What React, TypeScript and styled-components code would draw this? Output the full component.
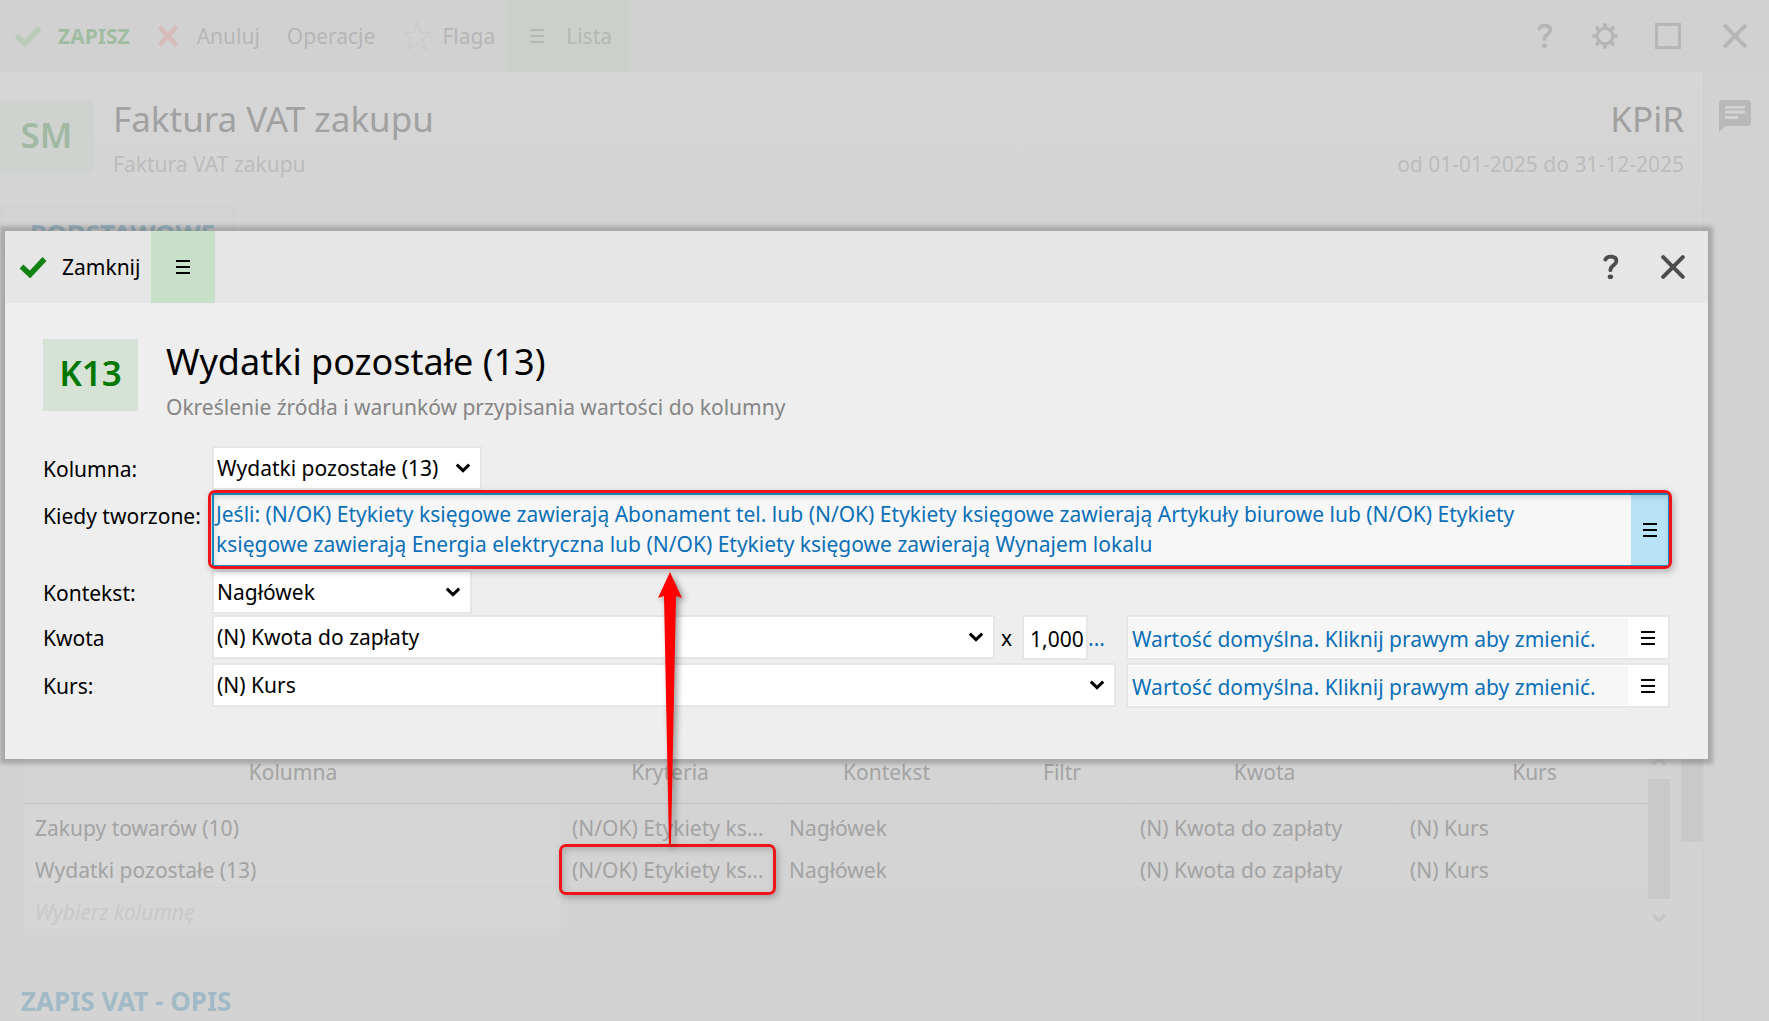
import React from "react";
import styled, { createGlobalStyle, css } from "styled-components";

const GlobalStyle = createGlobalStyle`
  *, *::before, *::after { box-sizing: border-box; }
  body {
    margin: 0;
    background: #d3d3d3;
    font-family: "Noto Sans", "Open Sans", sans-serif;
    font-size: 21px;
    line-height: 30px;
    overflow: hidden;
  }
  button, input, select, textarea {
    font: inherit;
    color: inherit;
    margin: 0;
    padding: 0;
    border: 0;
    border-radius: 0;
    background: none;
    outline: none;
  }
  h1, h2, p { margin: 0; font-weight: 400; }
`;

/* ---------- icons ---------- */

const CheckIcon = () => (
  <svg width="28" height="22" viewBox="0 0 28 22" aria-hidden="true">
    <path d="M2.5 10.5 L11 18.5 L25.5 3" fill="none" stroke="currentColor" strokeWidth="5.5" />
  </svg>
);

const CrossIcon = () => (
  <svg width="22" height="22" viewBox="0 0 22 22" aria-hidden="true">
    <path d="M2.5 2 L19.5 20 M19.5 2 L2.5 20" stroke="currentColor" strokeWidth="5" />
  </svg>
);

const StarIcon = () => (
  <svg width="30" height="30" viewBox="0 0 30 30" aria-hidden="true">
    <path
      d="M15 1.5 L18.6 11.5 H29 L20.6 18 L24 28.5 L15 22.4 L6 28.5 L9.4 18 L1 11.5 H11.4 Z"
      fill="none"
      stroke="currentColor"
      strokeWidth="1"
    />
  </svg>
);

const MenuIcon = () => (
  <svg width="14" height="14" viewBox="0 0 14 14" aria-hidden="true">
    <path d="M0 1 H14 M0 7 H14 M0 13 H14" stroke="currentColor" strokeWidth="2" />
  </svg>
);

const HelpIcon = () => (
  <svg width="16" height="26" viewBox="0 0 16 26" aria-hidden="true">
    <path
      d="M2.3 5.6 C3.4 3.2 5.2 2.6 7.8 2.6 C11.4 2.6 13.4 4.4 13.4 7.1 C13.4 11.3 7.4 11.2 7.4 16.2"
      fill="none"
      stroke="currentColor"
      strokeWidth="3.8"
      strokeLinecap="round"
      strokeLinejoin="round"
    />
    <ellipse cx="7.4" cy="22.8" rx="2.7" ry="2.3" fill="currentColor" />
  </svg>
);

const GearIcon = () => (
  <svg width="26" height="26" viewBox="0 0 26 26" aria-hidden="true">
    <circle cx="13" cy="13" r="7.8" fill="none" stroke="currentColor" strokeWidth="3" />
    <path
      d="M13 2 V5 M13 21 V24 M2 13 H5 M21 13 H24 M5.2 5.2 L7.3 7.3 M18.7 18.7 L20.8 20.8 M5.2 20.8 L7.3 18.7 M18.7 7.3 L20.8 5.2"
      stroke="currentColor"
      strokeWidth="4"
      strokeLinecap="round"
    />
  </svg>
);

const MaximizeIcon = () => (
  <svg width="26" height="26" viewBox="0 0 26 26" aria-hidden="true">
    <rect x="1.5" y="1.5" width="23" height="23" fill="none" stroke="currentColor" strokeWidth="3" />
  </svg>
);

const CloseIcon = () => (
  <svg width="24" height="24" viewBox="0 0 24 24" aria-hidden="true">
    <path d="M2.2 2.2 L21.8 21.8 M21.8 2.2 L2.2 21.8" stroke="currentColor" strokeWidth="4" strokeLinecap="round" />
  </svg>
);

const ChatIcon = () => (
  <svg width="34" height="34" viewBox="0 0 34 34" aria-hidden="true">
    <path
      fillRule="evenodd"
      fill="currentColor"
      d="M4 1 H30 Q33 1 33 4 V24 Q33 27 30 27 H7.500 L1 33 V4 Q1 1 4 1 Z M7 7 V9.500 H27 V7 Z M7 11.500 V14.500 H27 V11.500 Z M7 17 V20 H20 V17 Z"
    />
  </svg>
);

const ChevronIcon = ({ up }: { up?: boolean }) => (
  <svg width="14" height="10" viewBox="0 0 14 10" aria-hidden="true">
    <path
      d={up ? "M0.8 8.4 L7 2.4 L13.2 8.4" : "M0.8 1.6 L7 7.6 L13.2 1.6"}
      fill="none"
      stroke="currentColor"
      strokeWidth="3"
    />
  </svg>
);

/* ---------- shared parts ---------- */

const Toolbar = styled.div`
  display: flex;
  align-items: stretch;
  justify-content: space-between;
  height: 72px;
  flex: none;
`;

const ToolGroup = styled.div`
  display: flex;
`;

const ToolButton = styled.button<{ $tone?: string; $icon?: string; $bold?: boolean; $gap?: number }>`
  display: flex;
  align-items: center;
  gap: ${(p) => p.$gap ?? 15}px;
  padding: 0 11px 0 14px;
  color: ${(p) => p.$tone ?? "inherit"};
  font-weight: ${(p) => (p.$bold ? 700 : 400)};
  svg { color: ${(p) => p.$icon ?? "inherit"}; flex: none; }
`;

const IconButton = styled.button<{ $width: number }>`
  display: flex;
  align-items: center;
  justify-content: center;
  width: ${(p) => p.$width}px;
`;

const Heading = styled.div<{ $gap: number }>`
  display: flex;
  align-items: flex-start;
  gap: ${(p) => p.$gap}px;
`;

const Badge = styled.div<{ $bg: string; $fg: string; $width: number }>`
  display: flex;
  align-items: center;
  justify-content: center;
  width: ${(p) => p.$width}px;
  height: 72px;
  padding-bottom: 4px;
  font-size: 35px;
  font-weight: 600;
  line-height: 46px;
  background: ${(p) => p.$bg};
  color: ${(p) => p.$fg};
`;

const TitleBlock = styled.div<{ $right?: boolean }>`
  display: flex;
  flex-direction: column;
  gap: 7px;
  text-align: ${(p) => (p.$right ? "right" : "left")};
  margin-left: ${(p) => (p.$right ? "auto" : "0")};
`;

const Title = styled.h1<{ $fg: string; $size?: number }>`
  font-size: ${(p) => p.$size ?? 35}px;
  line-height: 46px;
  color: ${(p) => p.$fg};
`;

const Subtitle = styled.p<{ $fg: string }>`
  color: ${(p) => p.$fg};
`;

const callout = css`
  content: "";
  position: absolute;
  border: 3px solid #f01418;
  border-radius: 7px;
  box-shadow: 2px 3px 7px rgba(0, 0, 0, 0.25), inset 2px 3px 7px rgba(0, 0, 0, 0.18);
  pointer-events: none;
`;

/* ---------- page behind the dialog ---------- */

const Page = styled.div`
  position: relative;
  display: flex;
  flex-direction: column;
  height: 100vh;
  overflow: hidden;
  background: #d3d3d3;
`;

const PageToolbar = styled(Toolbar)`
  background: #d1d1d1;
  color: #b6b6b6;
`;

const PageTools = styled(ToolGroup)`
  gap: 2px;
`;

const ListButton = styled(ToolButton)`
  padding: 0 16px 0 22px;
  gap: 22px;
  background: #cbd1ca;
`;

const PageBody = styled.div`
  display: flex;
  flex: 1;
  min-height: 0;
`;

const Main = styled.main`
  display: flex;
  flex-direction: column;
  flex: 1;
  min-width: 0;
  background: linear-gradient(#d6d6d6, #d3d3d3 180px);
`;

const SidePanel = styled.aside`
  display: flex;
  justify-content: center;
  align-items: flex-start;
  width: 66px;
  flex: none;
  padding: 27px 4px 0 0;
  border-left: 1px solid #cecece;
  color: #b9b9b9;
`;

const PageHeader = styled.header`
  padding: 24px 19px 0 0;
  ${Badge} { margin-top: 5px; }
`;

const Columns = styled.div`
  display: flex;
  flex: 1;
  min-height: 0;
`;

const Sheet = styled.div`
  flex: 1;
  min-width: 0;
  padding-top: 27px;
`;

const PageScroll = styled.div`
  width: 22px;
  flex: none;
`;

const PageThumb = styled.div`
  height: 663px;
  background: linear-gradient(transparent 200px, #c9c9c9 200px);
`;

const Tab = styled.button`
  display: block;
  height: 46px;
  margin-left: 1px;
  padding: 10px 18px 0 28px;
  border: 1px solid #cecece;
  font-size: 26px;
  font-weight: 700;
  color: #9fb8c3;
`;

const TabPanel = styled.div`
  height: 490px;
`;

const TableArea = styled.div`
  display: flex;
  margin: 0 11px 0 25px;
`;

const Table = styled.table`
  flex: 1;
  min-width: 0;
  width: 100%;
  align-self: flex-start;
  border-collapse: collapse;
  table-layout: fixed;
  color: #a3a3a3;
`;

const Col = styled.col<{ $width?: number }>`
  width: ${(p) => (p.$width ? `${p.$width}px` : "auto")};
`;

const HeadCell = styled.th`
  height: 61px;
  padding: 0;
  font-weight: 400;
  background: #d4d4d4;
  border-right: 1px solid #d2d2d2;
  border-bottom: 1px solid #c2c2c2;
  &:last-child { padding-left: 22px; }
`;

const Cell = styled.td<{ $marked?: boolean; $light?: boolean }>`
  position: relative;
  height: 42px;
  padding: 8px 0 0 10px;
  white-space: nowrap;
  background: ${(p) => (p.$light ? "#d6d6d6" : "#d4d4d4")};
  border-right: 1px solid #d2d2d2;
  border-bottom: 1px solid #d2d2d2;
  ${(p) =>
    p.$marked &&
    css`
      &::after {
        ${callout}
        inset: -2px 2px -8px -3px;
        z-index: 1;
      }
    `}
`;

const NewRowInput = styled.input`
  display: block;
  width: 100%;
  font-style: italic;
  &::placeholder { color: #c8c8c8; opacity: 1; }
`;

const TableScroll = styled.div`
  width: 22px;
  flex: none;
  color: #c6c6c6;
`;

const ScrollArrow = styled.button`
  display: flex;
  align-items: center;
  justify-content: center;
  width: 22px;
  height: 37px;
`;

const ScrollThumb = styled.div`
  height: 120px;
  background: #c9c9c9;
`;

const SectionTitle = styled.h2`
  margin: 50px 0 0 21px;
  font-size: 26px;
  font-weight: 700;
  color: #a2bac6;
`;

/* ---------- dialog ---------- */

const Dialog = styled.section`
  position: absolute;
  top: 231px;
  left: 5px;
  right: 61px;
  z-index: 2;
  background: #eeeeee;
  color: #000;
  box-shadow: 0 0 4px 5px rgba(0, 0, 0, 0.2);
`;

const DialogToolbar = styled(Toolbar)`
  background: #e6e6e6;
`;

const DialogTools = styled(ToolGroup)`
  padding-right: 10px;
  color: #4c4c4c;
`;

const DialogMenu = styled(IconButton)`
  background: #c8e0c8;
`;

const DialogBody = styled.div`
  padding: 36px 38px 51px;
`;

const Form = styled.form`
  display: flex;
  flex-direction: column;
  gap: 1px;
  margin-top: 24px;
`;

const FormGroup = styled.div`
  display: flex;
  flex-direction: column;
  gap: 3px;
`;

const FormRow = styled.div`
  display: flex;
  align-items: flex-start;
`;

const Label = styled.label`
  width: 169px;
  flex: none;
  padding-top: 8px;
  white-space: nowrap;
`;

const SelectBox = styled.div<{ $width?: number }>`
  display: grid;
  align-items: center;
  ${(p) => (p.$width ? `width: ${p.$width}px;` : "flex: 1;")}
  min-width: 0;
  height: 44px;
  border: 2px solid #e6e6e6;
  background: #fff;
  > * { grid-area: 1 / 1; }
  svg { justify-self: end; margin-right: 10px; pointer-events: none; }
`;

const Select = styled.select`
  width: 100%;
  height: 40px;
  padding: 0 26px 0 3px;
  appearance: none;
`;

const CriteriaBox = styled.div`
  position: relative;
  display: flex;
  flex: 1;
  min-width: 0;
  height: 74px;
  border: 2px solid #1e96d0;
  background: #f7f7f7;
  &::after {
    ${callout}
    inset: -5px -4px -4px -6px;
  }
`;

const CriteriaText = styled.textarea`
  flex: 1;
  min-width: 0;
  padding: 4px 40px 0 2px;
  resize: none;
  overflow: hidden;
  color: #0c70b8;
`;

const CriteriaMenu = styled(IconButton)`
  background: #b8e2f5;
`;

const Times = styled.span`
  width: 27px;
  flex: none;
  padding: 8px 0 0 6px;
`;

const NumberInput = styled.input`
  width: 66px;
  flex: none;
  height: 45px;
  padding: 2px 0 0 6px;
  border: 2px solid #e6e6e6;
  background: #fff;
`;

const MoreLink = styled.a`
  width: 38px;
  flex: none;
  padding-top: 8px;
  color: #0c70b8;
  text-decoration: none;
`;

const DefaultBox = styled.div<{ $offset?: boolean }>`
  display: flex;
  width: 544px;
  flex: none;
  height: 45px;
  margin-left: ${(p) => (p.$offset ? "10px" : "0")};
  border: 2px solid #e6e6e6;
  background: #fff;
`;

const DefaultInput = styled.input`
  flex: 1;
  min-width: 0;
  margin: 1px 0;
  padding: 3px 0 0 4px;
  background: #f7f7f7;
  color: #0c70b8;
`;

const Arrow = styled.svg`
  position: absolute;
  top: 336px;
  left: 645px;
  overflow: visible;
  filter: drop-shadow(3px 3px 3px rgba(0, 0, 0, 0.4));
  pointer-events: none;
`;

/* ---------- data ---------- */

const columns: { title: string; width?: number }[] = [
  { title: "Kolumna" },
  { title: "Kryteria", width: 217 },
  { title: "Kontekst", width: 216 },
  { title: "Filtr", width: 135 },
  { title: "Kwota", width: 270 },
  { title: "Kurs", width: 248 },
];

const rows = [
  ["Zakupy towarów (10)", "(N/OK) Etykiety ks...", "Nagłówek", "", "(N) Kwota do zapłaty", "(N) Kurs"],
  ["Wydatki pozostałe (13)", "(N/OK) Etykiety ks...", "Nagłówek", "", "(N) Kwota do zapłaty", "(N) Kurs"],
];

const criteria =
  "Jeśli: (N/OK) Etykiety księgowe zawierają Abonament tel. lub (N/OK) Etykiety księgowe zawierają Artykuły biurowe lub (N/OK) Etykiety księgowe zawierają Energia elektryczna lub (N/OK) Etykiety księgowe zawierają Wynajem lokalu";

function SelectField({ id, value, width }: { id: string; value: string; width?: number }) {
  return (
    <SelectBox $width={width}>
      <Select id={id} defaultValue={value}>
        <option value={value}>{value}</option>
      </Select>
      <ChevronIcon />
    </SelectBox>
  );
}

function DefaultField({ label, offset }: { label: string; offset?: boolean }) {
  return (
    <DefaultBox $offset={offset}>
      <DefaultInput aria-label={label} readOnly value="Wartość domyślna. Kliknij prawym aby zmienić." />
      <IconButton type="button" $width={40} aria-label="Menu">
        <MenuIcon />
      </IconButton>
    </DefaultBox>
  );
}

function ColumnDialog() {
  return (
    <Dialog role="dialog" aria-labelledby="dialog-title">
      <DialogToolbar>
        <ToolGroup>
          <ToolButton type="button" $icon="#128312">
            <CheckIcon />
            Zamknij
          </ToolButton>
          <DialogMenu type="button" $width={64} aria-label="Menu">
            <MenuIcon />
          </DialogMenu>
        </ToolGroup>
        <DialogTools>
          <IconButton type="button" $width={74} aria-label="Pomoc">
            <HelpIcon />
          </IconButton>
          <IconButton type="button" $width={50} aria-label="Zamknij okno">
            <CloseIcon />
          </IconButton>
        </DialogTools>
      </DialogToolbar>
      <DialogBody>
        <Heading $gap={28}>
          <Badge $bg="#d6e2d6" $fg="#007800" $width={95}>
            K13
          </Badge>
          <TitleBlock>
            <Title id="dialog-title" $fg="#000" $size={36}>
              Wydatki pozostałe (13)
            </Title>
            <Subtitle $fg="#858585">Określenie źródła i warunków przypisania wartości do kolumny</Subtitle>
          </TitleBlock>
        </Heading>
        <Form>
          <FormGroup>
            <FormRow>
              <Label htmlFor="column">Kolumna:</Label>
              <SelectField id="column" value="Wydatki pozostałe (13)" width={270} />
            </FormRow>
            <FormRow>
              <Label htmlFor="criteria">Kiedy tworzone:</Label>
              <CriteriaBox>
                <CriteriaText id="criteria" rows={2} readOnly value={criteria} />
                <CriteriaMenu type="button" $width={37} aria-label="Menu">
                  <MenuIcon />
                </CriteriaMenu>
              </CriteriaBox>
            </FormRow>
            <FormRow>
              <Label htmlFor="context">Kontekst:</Label>
              <SelectField id="context" value="Nagłówek" width={260} />
            </FormRow>
          </FormGroup>
          <FormGroup>
            <FormRow>
              <Label htmlFor="amount">Kwota</Label>
              <SelectField id="amount" value="(N) Kwota do zapłaty" />
              <Times>x</Times>
              <NumberInput aria-label="Mnożnik" defaultValue="1,000" />
              <MoreLink href="#more">...</MoreLink>
              <DefaultField label="Filtr kwoty" />
            </FormRow>
            <FormRow>
              <Label htmlFor="rate">Kurs:</Label>
              <SelectField id="rate" value="(N) Kurs" />
              <DefaultField label="Filtr kursu" offset />
            </FormRow>
          </FormGroup>
        </Form>
      </DialogBody>
      <Arrow width="40" height="278" viewBox="0 0 40 278" aria-hidden="true">
        <path d="M20 5 L32 31 L26 29 L21 278 H19 L14 29 L8 31 Z" fill="#ff0000" />
      </Arrow>
    </Dialog>
  );
}

export default function App() {
  return (
    <>
      <GlobalStyle />
      <Page>
        <PageToolbar>
          <PageTools>
            <ToolButton type="button" $tone="#a0bca1" $icon="#b8ccb8" $bold $gap={16}>
              <CheckIcon />
              ZAPISZ
            </ToolButton>
            <ToolButton type="button" $icon="#d8bcbc" $gap={18}>
              <CrossIcon />
              Anuluj
            </ToolButton>
            <ToolButton type="button">Operacje</ToolButton>
            <ToolButton type="button" $icon="#c8c8c8" $gap={10}>
              <StarIcon />
              Flaga
            </ToolButton>
            <ListButton type="button">
              <MenuIcon />
              Lista
            </ListButton>
          </PageTools>
          <ToolGroup>
            <IconButton type="button" $width={60} aria-label="Pomoc">
              <HelpIcon />
            </IconButton>
            <IconButton type="button" $width={60} aria-label="Ustawienia">
              <GearIcon />
            </IconButton>
            <IconButton type="button" $width={66} aria-label="Maksymalizuj">
              <MaximizeIcon />
            </IconButton>
            <IconButton type="button" $width={68} aria-label="Zamknij">
              <CloseIcon />
            </IconButton>
          </ToolGroup>
        </PageToolbar>
        <PageBody>
          <Main>
            <PageHeader>
              <Heading $gap={20}>
                <Badge $bg="#cfd3cf" $fg="#a1b9a2" $width={93}>
                  SM
                </Badge>
                <TitleBlock>
                  <Title $fg="#a1a1a1">Faktura VAT zakupu</Title>
                  <Subtitle $fg="#bcbcbc">Faktura VAT zakupu</Subtitle>
                </TitleBlock>
                <TitleBlock $right>
                  <Title as="h2" $fg="#a1a1a1">
                    KPiR
                  </Title>
                  <Subtitle $fg="#bcbcbc">od 01-01-2025 do 31-12-2025</Subtitle>
                </TitleBlock>
              </Heading>
            </PageHeader>
            <Columns>
              <Sheet>
                <Tab type="button">PODSTAWOWE</Tab>
                <TabPanel />
                <TableArea>
                  <Table>
                    <colgroup>
                      {columns.map((c) => (
                        <Col key={c.title} $width={c.width} />
                      ))}
                    </colgroup>
                    <thead>
                      <tr>
                        {columns.map((c) => (
                          <HeadCell key={c.title} scope="col">
                            {c.title}
                          </HeadCell>
                        ))}
                      </tr>
                    </thead>
                    <tbody>
                      {rows.map((row, r) => (
                        <tr key={row[0]}>
                          {row.map((text, c) => (
                            <Cell key={c} $light={c === 0} $marked={r === 1 && c === 1}>
                              {text}
                            </Cell>
                          ))}
                        </tr>
                      ))}
                      <tr>
                        <Cell $light>
                          <NewRowInput aria-label="Nowa kolumna" placeholder="Wybierz kolumnę" />
                        </Cell>
                      </tr>
                    </tbody>
                  </Table>
                  <TableScroll>
                    <ScrollArrow type="button" aria-label="W górę">
                      <ChevronIcon up />
                    </ScrollArrow>
                    <ScrollThumb />
                    <ScrollArrow type="button" aria-label="W dół">
                      <ChevronIcon />
                    </ScrollArrow>
                  </TableScroll>
                </TableArea>
                <SectionTitle>ZAPIS VAT - OPIS</SectionTitle>
              </Sheet>
              <PageScroll>
                <PageThumb />
              </PageScroll>
            </Columns>
          </Main>
          <SidePanel>
            <ChatIcon />
          </SidePanel>
        </PageBody>
        <ColumnDialog />
      </Page>
    </>
  );
}
